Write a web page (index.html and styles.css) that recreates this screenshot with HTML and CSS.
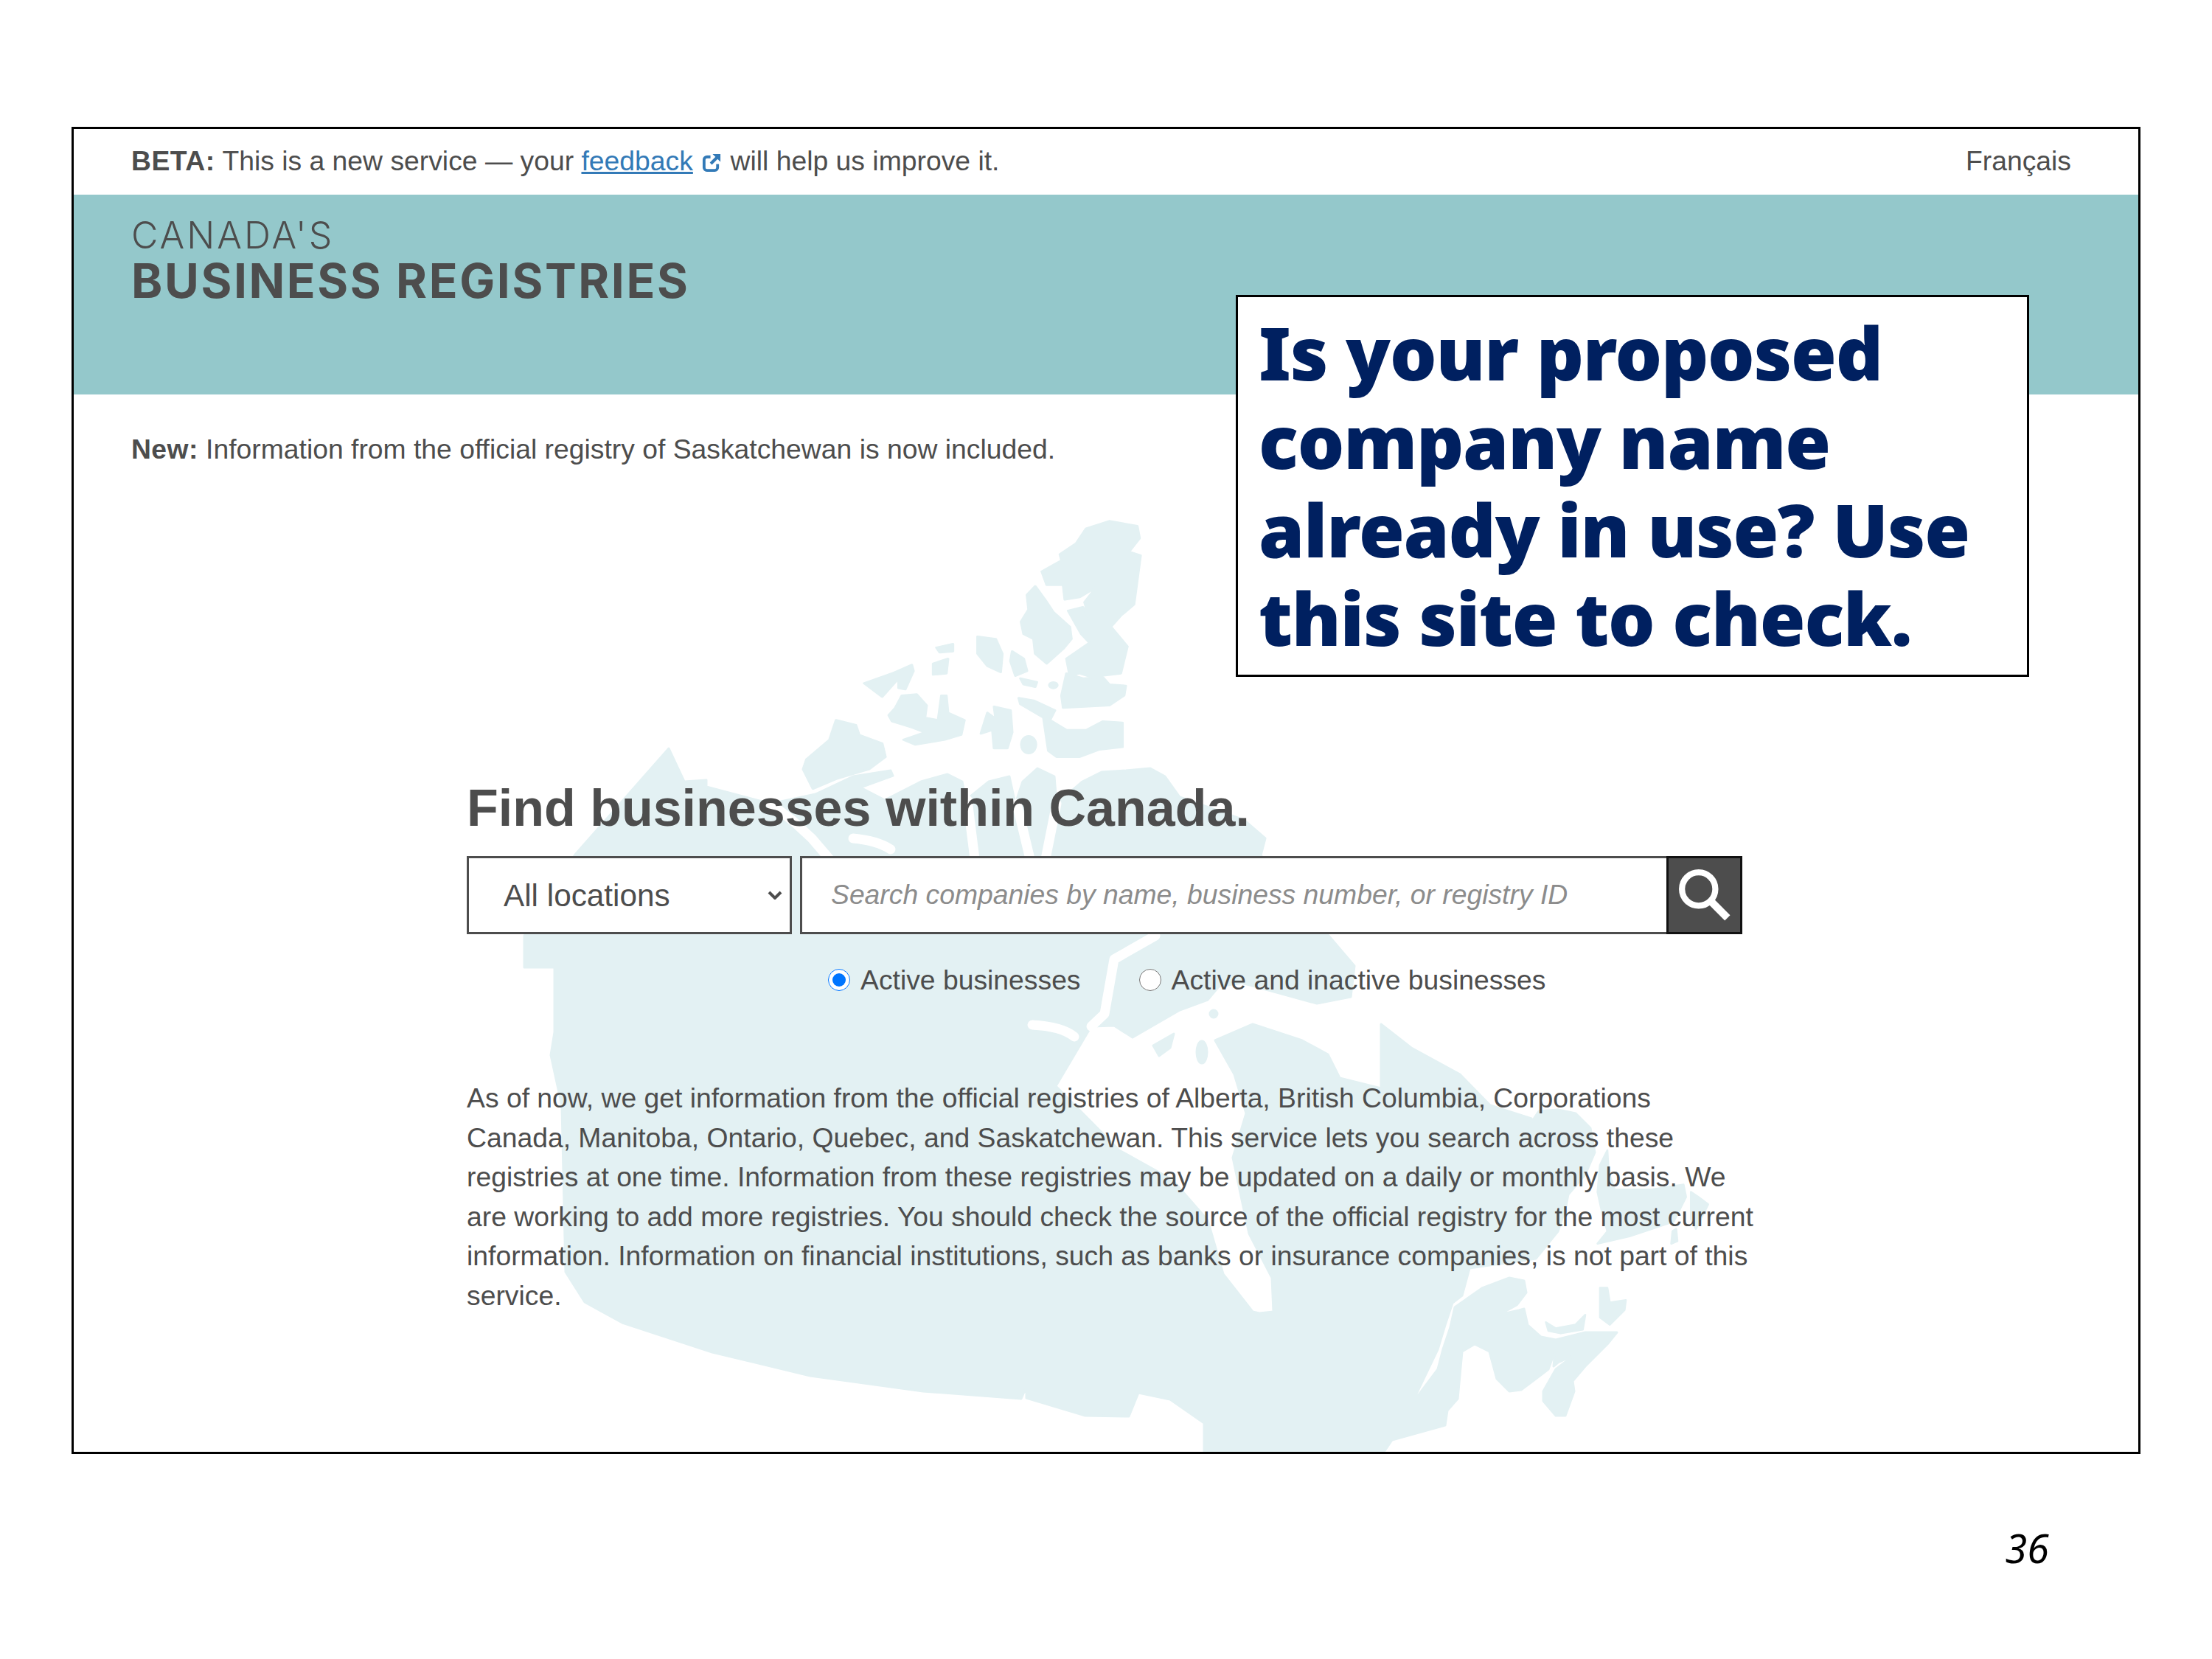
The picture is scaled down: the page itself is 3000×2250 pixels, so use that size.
FILE: index.html
```
<!DOCTYPE html>
<html lang="en">
<head>
<meta charset="utf-8">
<title>Canada's Business Registries</title>
<link rel="stylesheet" href="styles.css">
</head>
<body>
<div class="frame">
  <svg class="map" viewBox="100 175 2800 1794" width="2800" height="1794" aria-hidden="true">
    <g class="land">
      <path d="M907 1015L928 1060 958 1058 958 1067 1045 1090 1106 1077 1157 1053 1208 1045 1211 1052 1167 1068 1200 1085 1249 1060 1285 1050 1305 1060 1310 1085 1341 1060 1369 1053 1377 1090 1387 1060 1407 1042 1430 1053 1433 1090 1468 1060 1494 1047 1527 1045 1560 1042 1580 1053 1600 1081 1687 1112 1716 1137 1710 1160 1802 1269 1837 1310 1832 1352 1786 1361 1735 1347 1684 1333 1653 1338 1638 1356 1600 1370 1536 1407 1511 1391 1480 1392 1432 1473 1518 1560 1590 1600 1638 1655 1659 1728 1699 1779 1708 1781 1727 1779 1725 1733 1694 1673 1684 1627 1672 1570 1690 1510 1674 1457 1648 1411 1699 1389 1766 1411 1801 1430 1817 1462 1873 1476 1873 1389 1914 1421 1980 1457 2021 1499 2077 1517 2067 1537 2087 1507 2113 1505 2137 1510 2157 1530 2163 1563 2150 1593 2127 1620 2123 1640 2113 1670 2083 1707 1993 1720 1983 1757 1970 1767 1960 1797 1950 1830 1914 1905 1950 1857 1957 1830 1967 1800 1973 1773 2010 1747 2047 1733 2067 1737 2070 1753 2057 1770 2033 1783 2060 1777 2067 1775 2072 1797 2090 1813 2110 1817 2150 1807 2193 1807 2180 1823 2150 1853 2133 1873 2135 1887 2123 1920 2110 1920 2093 1900 2093 1887 2110 1857 2135 1838 2113 1848 2107 1853 2109 1832 2100 1857 2083 1870 2063 1885 2047 1887 2030 1870 2020 1833 2000 1823 1983 1833 1977 1897 1963 1913 1960 1933 1888 1953 1873 1975 1633 1975 1633 1930 1587 1898 1544 1889 1531 1921 1472 1920 1392 1896 1392 1881 1385 1897 1252 1887 1099 1866 966 1834 844 1794 793 1766 767 1725 762 1500 747 1431 752 1400 752 1312 711 1312 711 1269 780 1159Z"/>
      <path d="M1564 1418L1592 1402 1587 1421 1572 1432Z"/>
      <ellipse cx="1630" cy="1427" rx="7" ry="15"/>
      <circle cx="1646" cy="1375" r="5"/>
    </g>
    <g class="water">
      <path d="M1045 1090L1075 1113 1101 1137 1125 1165"/>
      <path d="M1157 1137Q1190 1140 1208 1152"/>
      <path d="M1312 1085L1322 1165"/>
      <path d="M1379 1090L1397 1165"/>
      <path d="M1433 1090L1418 1165"/>
      <path d="M1567 1269L1511 1301 1498 1375 1480 1392"/>
      <path d="M1400 1390Q1440 1392 1457 1406"/>
    </g>
    <g class="land isles-north">
      <path d="M1130 80L1215 100 1222 150 1190 205 1225 220 1210 370 1205 420 1165 465 1135 510 1185 590 1165 700 1075 715 1040 700 1010 710 1000 640 1070 575 1045 540 1005 445 1050 430 1070 480 1055 410 1090 350 1040 390 995 400 990 340 940 340 925 285 985 240 980 215 1030 170 1060 110Z"/>
      <path d="M905 345L935 400 960 450 1010 510 1015 560 990 600 940 660 905 620 900 560 870 540 862 490 885 440 880 380Z"/>
      <path d="M730 550L785 560 805 620 800 695 760 670 730 620Z"/>
      <path d="M835 610L870 640 880 690 845 710 830 650Z"/>
      <path d="M605 595L655 580 655 610 615 615Z"/>
      <path d="M595 660L640 640 635 700 595 705Z"/>
      <path d="M385 740L470 700 530 665 535 690 510 765 490 760 490 720 440 795Z"/>
      <path d="M500 790L545 785 575 830 570 880 610 890 620 790 635 790 640 860 690 890 680 950 630 970 540 990 505 970 570 940 530 920 470 895 460 870 480 840Z"/>
      <path d="M860 720L910 735 905 755 870 745Z"/>
      <circle cx="960" cy="748" r="12"/>
      <path d="M1000 700L1050 720 1110 715 1130 745 1180 750 1175 790 1130 830 990 840 985 790Z"/>
      <path d="M855 800L900 810 965 850 950 890 1000 930 1060 930 1110 895 1170 900 1170 1000 1100 1010 1040 1040 970 1040 945 1015 930 880 860 825Z"/>
      <path d="M780 835L830 850 835 940 820 1005 780 1005 775 930 740 945 760 860 785 885Z"/>
      <ellipse cx="885" cy="990" rx="22" ry="35"/>
      <path d="M300 890L360 910 370 950 440 985 450 1040 400 1090 300 1130 230 1170 200 1090 210 1050 280 970Z"/>
    </g>
    <g class="land isles-east">
      <path d="M650 620L690 570 670 500 650 410 660 300 690 240 695 330 720 400 870 400 1000 380 1010 430 960 530 780 590Z"/>
      <path d="M1030 410L1060 430 1100 460 1080 500 1050 560 1030 520Z"/>
      <path d="M970 560L975 610 950 620 955 570Z"/>
      <path d="M660 800L690 800 700 860 765 850 760 890 700 950 660 920Z"/>
      <path d="M440 940L480 965 560 950 600 910 590 970 500 985 450 975Z"/>
    </g>
  </svg>

  <div class="topbar">
    <p class="beta"><strong>BETA:</strong> This is a new service — your <a class="link" href="#">feedback</a>
      <svg class="ext" viewBox="0 0 28 28" aria-hidden="true"><path d="M12 6H7a4 4 0 0 0-4 4v11a4 4 0 0 0 4 4h11a4 4 0 0 0 4-4v-5" fill="none" stroke-width="4"/><path d="M15 2h11v11l-4-4-8 8-3-3 8-8z"/></svg>
      will help us improve it.</p>
    <a class="lang" href="#">Français</a>
  </div>

  <header class="banner">
    <div class="brand-top">CANADA'S</div>
    <div class="brand-main">BUSINESS REGISTRIES</div>
  </header>

  <p class="notice"><strong>New:</strong> Information from the official registry of Saskatchewan is now included.</p>

  <main class="search">
    <h1 class="search-title">Find businesses within Canada.</h1>
    <form class="search-row">
      <div class="select-wrap">
        <select class="select"><option>All locations</option></select>
        <svg class="chevron" viewBox="0 0 20 12" aria-hidden="true"><path d="M2 2l8 8 8-8" fill="none" stroke-width="4"/></svg>
      </div>
      <input class="query" type="text" placeholder="Search companies by name, business number, or registry ID">
      <button class="go" type="button" aria-label="Search">
        <svg class="go-icon" viewBox="0 0 70 70" aria-hidden="true"><circle cx="27" cy="27" r="22" fill="none" stroke-width="8"/><path d="M42 42L65 65" fill="none" stroke-width="10"/></svg>
      </button>
    </form>
    <div class="radios">
      <label class="radio"><input type="radio" name="status" checked>Active businesses</label>
      <label class="radio"><input type="radio" name="status">Active and inactive businesses</label>
    </div>
    <p class="about">As of now, we get information from the official registries of Alberta, British Columbia, Corporations Canada, Manitoba, Ontario, Quebec, and Saskatchewan. This service lets you search across these registries at one time. Information from these registries may be updated on a daily or monthly basis. We are working to add more registries. You should check the source of the official registry for the most current information. Information on financial institutions, such as banks or insurance companies, is not part of this service.</p>
  </main>

  <aside class="callout">Is your proposed company name already in use? Use this site to check.</aside>
</div>
<div class="pagenum">36</div>
</body>
</html>
```
FILE: styles.css
```
* { box-sizing: border-box; }
html, body { margin: 0; background: #fff; }
body { padding: 172px 0 0 97px; font-family: "Liberation Sans", Arial, sans-serif; color: #4d4d4d; font-size: 37.3px; }
p { margin: 0; }

.frame { position: relative; width: 2806px; height: 1800px; border: 3px solid #000; overflow: hidden; background: #fff; }
.map { position: absolute; left: 0; top: 0; }
.land { fill: #e3f1f3; stroke: #e3f1f3; stroke-width: 3; stroke-linejoin: round; }
.isles-north { transform: translate(1000px, 680px) scale(.4464, .3333); stroke-width: 8; }
.isles-east { transform: translate(1950px, 1480px) scale(.3333); stroke-width: 8; }
.water { fill: none; stroke: #fff; stroke-width: 13; stroke-linejoin: round; stroke-linecap: round; }

.topbar { position: relative; display: flex; justify-content: space-between; align-items: center; height: 89px; padding: 0 91px 3px 78px; }
.beta strong { font-weight: 700; letter-spacing: .5px; }
.link { color: #337ab7; text-decoration: underline; }
.ext { width: 27px; height: 27px; vertical-align: -3px; fill: #337ab7; stroke: #337ab7; stroke-width: 0; margin: 0 1px 0 2px; }
.ext path:first-child { stroke-width: 4; }
.lang { color: #4d4d4d; text-decoration: none; }

.banner { position: relative; height: 271px; padding: 26px 0 0 78px; background: #94c8cb; font-family: Inter, sans-serif; color: #4d4d4d; }
.brand-top { font-size: 50px; line-height: 58px; font-weight: 300; letter-spacing: 3px; }
.brand-main { font-size: 64px; line-height: 66px; font-weight: 700; letter-spacing: 2.6px; }

.notice { position: relative; padding: 48px 0 0 78px; line-height: 53px; }
.notice strong { letter-spacing: .4px; }

.search { position: relative; width: 1754px; margin: 420px 0 0 533px; }
.search-title { margin: 0; font-size: 70px; line-height: 80px; font-weight: 700; color: #4d4d4d; }
.search-row { display: flex; height: 106px; margin-top: 25px; }
.select-wrap { position: relative; width: 441px; margin-right: 11px; }
.select { appearance: none; width: 100%; height: 100%; padding: 0 0 0 47px; border: 3px solid #4d4d4d; border-radius: 0; background: #fff; color: #4d4d4d; font: 42.3px "Liberation Sans", Arial, sans-serif; }
.chevron { position: absolute; right: 13px; top: 47px; width: 20px; height: 12px; stroke: #4d4d4d; }
.query { width: 1175px; height: 100%; padding: 0 0 2px 39px; border: 3px solid #4d4d4d; border-right: 0; border-radius: 0; background: #fff; font: 37.3px "Liberation Sans", Arial, sans-serif; color: #4d4d4d; }
.query::placeholder { font-style: italic; color: #8c8c8c; opacity: 1; }
.go { display: flex; align-items: center; justify-content: center; width: 103px; height: 100%; padding: 0; border: 3px solid #111; background: #4d4d4d; }
.go-icon { width: 72px; height: 72px; stroke: #fff; }

.radios { display: flex; gap: 79px; margin: 40px 0 0 490px; line-height: 44px; }
.radio { display: flex; align-items: center; }
.radio input { width: 30px; height: 30px; margin: 0 14px 0 0; }

.about { margin-top: 112px; line-height: 53.6px; }

.callout { position: absolute; left: 1576px; top: 225px; width: 1076px; height: 518px; padding: 14px 20px 0 28px; border: 3px solid #000; background: #fff; font-family: "Noto Sans", sans-serif; font-weight: 900; font-size: 100px; line-height: 120px; letter-spacing: -1.2px; color: #002060; }

.pagenum { width: 2682px; margin-top: 92px; text-align: right; font-family: "Noto Sans", sans-serif; font-style: italic; font-size: 54px; line-height: 70px; color: #000; }
```
